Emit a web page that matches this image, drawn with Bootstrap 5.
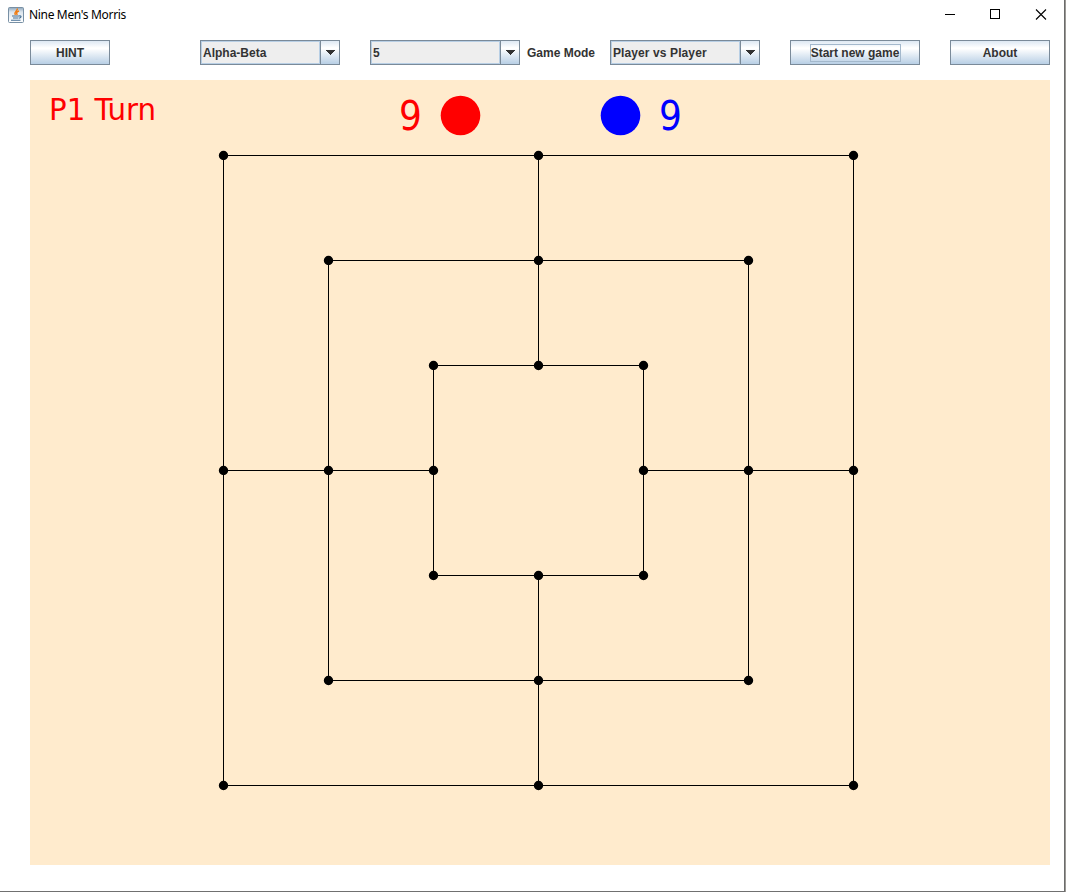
<!DOCTYPE html>
<html lang="en">
<head>
<meta charset="utf-8">
<title>Nine Men's Morris</title>
<link rel="stylesheet" href="https://cdn.jsdelivr.net/npm/bootstrap@5.3.0/dist/css/bootstrap.min.css">
<style>
body{width:1066px;height:892px;background:#9b9995;overflow:hidden}
.app-window{width:1065px;height:892px;background:#fff;border-right:1px solid #6b6b6b;border-bottom:1px solid #707070}
.title-bar{height:30px;padding-left:8px}
.title-text{font:12px/16px "Noto Sans","Open Sans",sans-serif;color:#000;margin-left:5px;letter-spacing:-.33px}
.win-controls{width:129px;height:30px}
.tool-bar{height:25px;margin:10px 14px 15px 30px;font:bold 12px/14px "Liberation Sans",sans-serif;color:#333}
.swing-btn{--bs-btn-border-radius:0;padding:0;height:25px;border:1px solid #7a8a99;border-radius:0;font:inherit;color:#333;background:linear-gradient(#dde8f3 0,#fff 30%,#fff 33%,#b8cfe5 100%)}
.swing-btn:hover{color:#333;border-color:#7a8a99}
.swing-combo{height:25px;border:1px solid #7a8a99}
.combo-value{background:#eee;border:1px solid #b8cfe5;padding-left:1px}
.combo-arrow{width:19px;padding-right:1px;border-left:1px solid #7a8a99;background:linear-gradient(#dde8f3 0,#fff 30%,#fff 33%,#b8cfe5 100%)}
.focus-box{border:1px solid #a3b8cc;width:91px;height:18px;line-height:16px;white-space:nowrap}
.board{width:1020px;height:785px;margin-left:30px;background:#ffebcd}
.board text{font-family:"DejaVu Sans Condensed","DejaVu Sans",sans-serif;font-stretch:condensed}
</style>
</head>
<body class="m-0">
<main class="app-window">
<header class="title-bar d-flex align-items-center">
<svg width="16" height="16" viewBox="0 0 16 16" fill="none">
<defs><linearGradient id="jg" x2="0" y2="1"><stop stop-color="#8ea6bb"/><stop offset=".3" stop-color="#dce5ed"/><stop offset="1" stop-color="#fff"/></linearGradient></defs>
<rect x=".5" y=".5" width="15" height="15" rx="1" fill="url(#jg)" stroke="#7890a5"/>
<path d="M9.300 1.500C10 4 5.500 4.300 7.300 8M11 4C8.800 4.800 8 5.500 9.200 8" stroke="#f07c13" stroke-width="1.500"/>
<path d="M4 9h7M5 11h5.500M3 13.300h9.500M11 9c3-.8 2.500 1.600 0 2.300" stroke="#456f94" stroke-width="1.100"/>
</svg>
<span class="title-text">Nine Men's Morris</span>
<svg class="win-controls ms-auto" viewBox="0 0 129 30" fill="none" stroke="#000" shape-rendering="crispEdges">
<path d="M10 14.5h10M55.500 9.500h9v9h-9z"/>
<path d="M101 9.500l10 10M111 9.500l-10 10" shape-rendering="auto" stroke-width="1.1"/>
</svg>
</header>
<nav class="tool-bar d-flex align-items-center">
<button class="btn swing-btn" style="width:80px">HINT</button>
<div class="swing-combo d-flex" style="width:140px;margin-left:90px"><div class="combo-value flex-grow-1 d-flex align-items-center">Alpha-Beta</div><div class="combo-arrow d-flex align-items-center justify-content-center"><svg width="10" height="5" shape-rendering="crispEdges"><path d="M0 0h10L5 5z" fill="#333"/></svg></div></div>
<div class="swing-combo d-flex" style="width:150px;margin-left:30px"><div class="combo-value flex-grow-1 d-flex align-items-center">5</div><div class="combo-arrow d-flex align-items-center justify-content-center"><svg width="10" height="5" shape-rendering="crispEdges"><path d="M0 0h10L5 5z" fill="#333"/></svg></div></div>
<span class="text-nowrap" style="width:83px;margin-left:7px">Game Mode</span>
<div class="swing-combo d-flex" style="width:150px"><div class="combo-value flex-grow-1 d-flex align-items-center" style="letter-spacing:.1px">Player vs Player</div><div class="combo-arrow d-flex align-items-center justify-content-center"><svg width="10" height="5" shape-rendering="crispEdges"><path d="M0 0h10L5 5z" fill="#333"/></svg></div></div>
<button class="btn swing-btn d-flex align-items-center justify-content-center" style="width:130px;margin-left:30px"><span class="focus-box">Start new game</span></button>
<button class="btn swing-btn" style="width:100px;margin-left:30px">About</button>
</nav>
<svg class="board d-block" viewBox="30 80 1020 785">
<text x="49" y="120" font-size="30" fill="#f00" textLength="107" lengthAdjust="spacingAndGlyphs">P1 Turn</text>
<text x="399" y="130" font-size="40" fill="#f00">9</text>
<circle cx="460.500" cy="115.500" r="19.800" fill="#f00"/>
<circle cx="620.500" cy="115.500" r="19.800" fill="#00f"/>
<text x="659" y="130" font-size="40" fill="#00f">9</text>
<g fill="none" stroke="#000" shape-rendering="crispEdges">
<rect x="223.500" y="155.500" width="630" height="630"/>
<rect x="328.500" y="260.500" width="420" height="420"/>
<rect x="433.500" y="365.500" width="210" height="210"/>
<path d="M538.500 155.500v210M538.500 575.500v210M223.500 470.500h210M643.500 470.500h210"/>
</g>
<path fill="none" stroke="#000" stroke-width="9.400" stroke-linecap="round" d="M223.500 155.500h0M538.500 155.500h0M853.500 155.500h0M223.500 470.500h0M853.500 470.500h0M223.500 785.500h0M538.500 785.500h0M853.500 785.500h0M328.500 260.500h0M538.500 260.500h0M748.500 260.500h0M328.500 470.500h0M748.500 470.500h0M328.500 680.500h0M538.500 680.500h0M748.500 680.500h0M433.500 365.500h0M538.500 365.500h0M643.500 365.500h0M433.500 470.500h0M643.500 470.500h0M433.500 575.500h0M538.500 575.500h0M643.500 575.500h0"/>
</svg>
</main>
<script src="https://cdn.jsdelivr.net/npm/bootstrap@5.3.0/dist/js/bootstrap.bundle.min.js"></script>
</body>
</html>
